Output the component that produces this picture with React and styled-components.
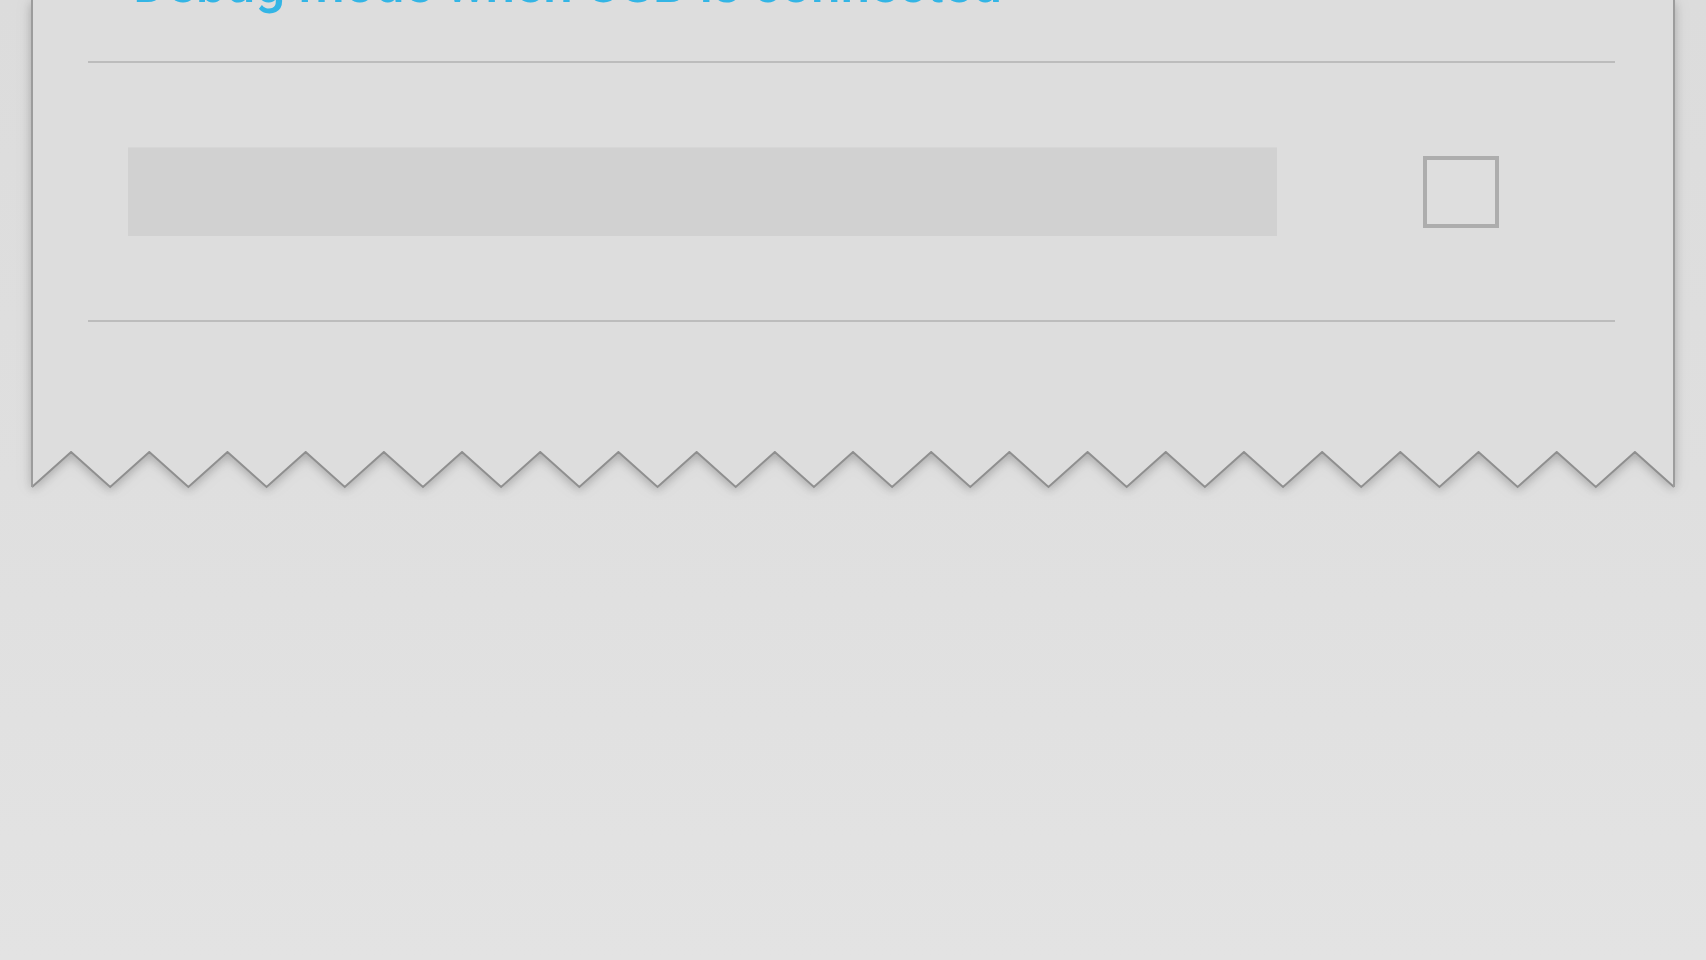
import React from "react";
import styled, { createGlobalStyle } from "styled-components";

const Global = createGlobalStyle`
  html, body {
    margin: 0;
    padding: 0;
  }
  body {
    width: 1706px;
    height: 960px;
    overflow: hidden;
    background: linear-gradient(180deg, #dcdcdc 0%, #dfdfdf 50%, #e3e3e3 100%);
    font-family: Roboto, "Noto Sans", "Liberation Sans", sans-serif;
  }
`;

const Page = styled.div`
  width: 1706px;
  height: 960px;
  display: flex;
  flex-direction: column;
  align-items: flex-start;
  padding-left: 31px;
  box-sizing: border-box;
`;

const Sheet = styled.div`
  width: 1644px;
  display: flex;
  flex-direction: column;
  filter: drop-shadow(0 3px 5px rgba(0, 0, 0, 0.18)) drop-shadow(0 0 8px rgba(0, 0, 0, 0.08));
`;

const Body = styled.div`
  height: 452px;
  background: #dddddd;
  border-left: 2px solid #9c9c9c;
  border-right: 2px solid #9c9c9c;
  box-sizing: border-box;
  padding: 0 58px 0 55px;
  display: flex;
  flex-direction: column;
  overflow: hidden;
`;

const Title = styled.div`
  margin-top: -42px;
  padding-left: 45px;
  font-size: 53px;
  line-height: 1;
  color: #33b5e5;
  font-weight: 500;
  white-space: nowrap;
  height: 52px;
`;

const Divider = styled.div`
  height: 2px;
  background: #bcbcbc;
  margin-top: ${(p) => p.$top}px;
`;

const Row = styled.div`
  height: 257px;
  display: flex;
  align-items: center;
  padding-left: 40px;
  padding-right: 116px;
`;

const Placeholder = styled.div`
  width: 1149px;
  height: 89px;
  background: #d1d1d1;
  border-top: 1px solid #d6d6d6;
  box-sizing: border-box;
`;

const Spacer = styled.div`
  flex: 1;
`;

const CheckBox = styled.div`
  width: 76px;
  height: 72px;
  box-sizing: border-box;
  border: 4px solid #adadad;
  background: #dedede;
`;

const EdgeSvg = styled.svg`
  display: block;
  width: 1644px;
  height: 38px;
  margin-top: -1px;
`;

function TornEdge() {
  const W = 1644;
  const H = 36;
  const teeth = 21;
  const left = 1;
  const right = W - 1;
  const P = (right - left) / teeth;
  const pts = [];
  for (let i = 0; i <= teeth; i++) {
    pts.push(`${(left + i * P).toFixed(2)},${H}`);
    if (i < teeth) pts.push(`${(left + (i + 0.5) * P).toFixed(2)},1`);
  }
  const zig = pts.join(" ");
  const fill = `${left},0 ${zig} ${right},0`;
  return (
    <EdgeSvg viewBox={`0 0 ${W} 38`}>
      <polygon points={fill} fill="#dddddd" />
      <polyline points={zig} fill="none" stroke="#8f8f8f" strokeWidth="2" strokeLinejoin="miter" />
      <line x1={left} y1="0" x2={left} y2={H} stroke="#9c9c9c" strokeWidth="2" />
      <line x1={right} y1="0" x2={right} y2={H} stroke="#9c9c9c" strokeWidth="2" />
    </EdgeSvg>
  );
}

export default function App() {
  return (
    <>
      <Global />
      <Page>
        <Sheet>
          <Body>
            <Title>Debug mode when USB is connected</Title>
            <Divider $top={51} />
            <Row>
              <Placeholder />
              <Spacer />
              <CheckBox />
            </Row>
            <Divider $top={0} />
          </Body>
          <TornEdge />
        </Sheet>
      </Page>
    </>
  );
}
